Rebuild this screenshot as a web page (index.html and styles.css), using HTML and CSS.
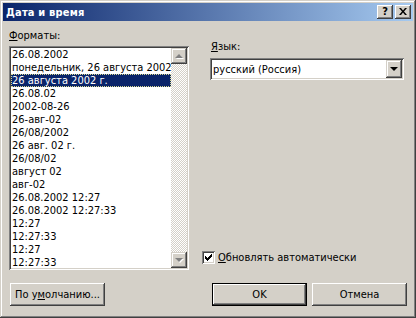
FILE: index.html
```html
<!DOCTYPE html>
<html lang="ru">
<head>
    <meta charset="UTF-8">
    <title>Дата и время</title>
    <link rel="stylesheet" href="styles.css">
</head>
<body>
    <!-- окно диалога -->
    <div class="window">
        <div class="titlebar">
            <span class="title">Дата и время</span>
            <div class="caption-buttons">
                <span class="cbtn">?</span>
                <span class="cbtn">
                    <svg width="8" height="7" viewBox="0 0 8 7"><path d="M0 0h2l2 2.5L6 0h2L5 3.5 8 7H6L4 4.5 2 7H0l3-3.5z" fill="#000"/></svg>
                </span>
            </div>
        </div>

        <div class="client">
            <div class="main">
                <!-- список форматов -->
                <div class="formats">
                    <div class="label"><u>Ф</u>орматы:</div>
                    <div class="listbox">
                        <ul class="items">
                            <li>26.08.2002</li>
                            <li>понедельник, 26 августа 2002</li>
                            <li class="selected">26 августа 2002 г.</li>
                            <li>26.08.02</li>
                            <li>2002-08-26</li>
                            <li>26-авг-02</li>
                            <li>26/08/2002</li>
                            <li>26 авг. 02 г.</li>
                            <li>26/08/02</li>
                            <li>август 02</li>
                            <li>авг-02</li>
                            <li>26.08.2002 12:27</li>
                            <li>26.08.2002 12:27:33</li>
                            <li>12:27</li>
                            <li>12:27:33</li>
                            <li>12:27</li>
                            <li>12:27:33</li>
                        </ul>
                        <div class="scrollbar">
                            <div class="sbtn"><span class="arrow up"></span></div>
                            <div class="track"></div>
                            <div class="sbtn"><span class="arrow down"></span></div>
                        </div>
                    </div>
                </div>

                <!-- язык -->
                <div class="language">
                    <div class="label lang-label"><u>Я</u>зык:</div>
                    <div class="combo">
                        <span class="combo-text">русский (Россия)</span>
                        <span class="combo-btn"><span class="arrow-black"></span></span>
                    </div>
                    <div class="check-row">
                        <span class="checkbox">
                            <svg width="7" height="7" viewBox="0 0 7 7"><path d="M0 2h1v1h1v1h1V3h1V2h1V1h1V0h1v3H6v1H5v1H4v1H3v1H2V6H1V5H0z" fill="#000"/></svg>
                        </span>
                        <span><u>О</u>бновлять автоматически</span>
                    </div>
                </div>
            </div>

            <!-- кнопки -->
            <div class="buttons">
                <div class="btn">По у<u>м</u>олчанию...</div>
                <div class="right-buttons">
                    <div class="btn default">OK</div>
                    <div class="btn">Отмена</div>
                </div>
            </div>
        </div>
    </div>
</body>
</html>
```

FILE: styles.css
```css
/* общие */
body {
    margin: 0;
    font-family: "DejaVu Sans Condensed", "DejaVu Sans", sans-serif;
    font-stretch: condensed;
    font-size: 11px;
    color: #000;
    background: #d4d0c8;
}

u {
    text-decoration: underline;
    text-underline-offset: 1px;
}

/* окно */
.window {
    width: 416px;
    height: 318px;
    box-sizing: border-box;
    padding: 3px 3px 4px;
    background: #d4d0c8;
    box-shadow: inset -1px -1px #404040, inset 1px 1px #d4d0c8,
                inset -2px -2px #808080, inset 2px 2px #fff;
    display: flex;
    flex-direction: column;
}

.titlebar {
    height: 18px;
    background: linear-gradient(to right, #0a246a, #a6caf0);
    display: flex;
    align-items: center;
    justify-content: space-between;
    padding: 0 2px 0 3px;
}

.title {
    color: #fff;
    font-weight: bold;
    font-size: 11px;
    letter-spacing: 0.2px;
}

.caption-buttons {
    display: flex;
    gap: 2px;
}

.cbtn {
    width: 16px;
    height: 14px;
    box-sizing: border-box;
    background: #d4d0c8;
    box-shadow: inset -1px -1px #404040, inset 1px 1px #fff,
                inset -2px -2px #808080, inset 2px 2px #d4d0c8;
    display: flex;
    align-items: center;
    justify-content: center;
    font-weight: bold;
    font-size: 11px;
    font-family: "DejaVu Sans", sans-serif;
    line-height: 1;
    padding-bottom: 1px;
}

.client {
    flex: 1;
    margin-top: 1px;
    padding: 7px 6px 8px 6px;
    display: flex;
    flex-direction: column;
}

.main {
    display: flex;
    gap: 13px;
}

.label {
    line-height: 13px;
    height: 13px;
}

/* список */
.formats {
    width: 180px;
}

.listbox {
    margin-top: 4px;
    height: 224px;
    box-sizing: border-box;
    padding: 2px;
    background: #fff;
    box-shadow: inset 1px 1px #808080, inset -1px -1px #fff,
                inset 2px 2px #404040, inset -2px -2px #d4d0c8;
    display: flex;
    overflow: hidden;
}

.items {
    list-style: none;
    margin: 0;
    padding: 0;
    flex: 1;
    overflow: hidden;
}

.items li {
    height: 13px;
    line-height: 13px;
    padding-left: 1px;
    white-space: nowrap;
}

.items li.selected {
    background: #0a246a;
    color: #fff;
    outline: 1px dotted #d8d890;
    outline-offset: -1px;
}

.scrollbar {
    width: 16px;
    display: flex;
    flex-direction: column;
}

.track {
    flex: 1;
    background: repeating-conic-gradient(#fff 0 25%, #d4d0c8 0 50%) 0 0 / 2px 2px;
}

.sbtn {
    height: 16px;
    background: #d4d0c8;
    box-shadow: inset -1px -1px #404040, inset 1px 1px #d4d0c8,
                inset -2px -2px #808080, inset 2px 2px #fff;
    display: flex;
    align-items: center;
    justify-content: center;
}

.arrow {
    width: 0;
    height: 0;
    border-left: 4px solid transparent;
    border-right: 4px solid transparent;
    filter: drop-shadow(1px 1px 0 #fff);
}

.arrow.up {
    border-bottom: 4px solid #808080;
}

.arrow.down {
    border-top: 4px solid #808080;
}

/* язык */
.language {
    flex: 1;
    display: flex;
    flex-direction: column;
    margin-top: -7px;
    padding-top: 18px;
}

.lang-label {
    margin-left: 9px;
}

.combo {
    margin: 5px 0 0 8px;
    width: 194px;
    height: 22px;
    box-sizing: border-box;
    padding: 2px;
    background: #fff;
    box-shadow: inset 1px 1px #808080, inset -1px -1px #fff,
                inset 2px 2px #404040, inset -2px -2px #d4d0c8;
    display: flex;
    align-items: center;
}

.combo-text {
    flex: 1;
    padding-left: 1px;
}

.combo-btn {
    width: 16px;
    height: 18px;
    box-sizing: border-box;
    background: #d4d0c8;
    box-shadow: inset -1px -1px #404040, inset 1px 1px #d4d0c8,
                inset -2px -2px #808080, inset 2px 2px #fff;
    display: flex;
    align-items: center;
    justify-content: center;
}

.arrow-black {
    width: 0;
    height: 0;
    border-left: 4px solid transparent;
    border-right: 4px solid transparent;
    border-top: 4px solid #000;
}

.check-row {
    margin-top: auto;
    margin-bottom: 6px;
    display: flex;
    align-items: center;
    gap: 3px;
    height: 13px;
}

.checkbox {
    width: 13px;
    height: 13px;
    box-sizing: border-box;
    background: #fff;
    box-shadow: inset 1px 1px #808080, inset -1px -1px #fff,
                inset 2px 2px #404040, inset -2px -2px #d4d0c8;
    display: flex;
    align-items: center;
    justify-content: center;
}

/* кнопки */
.buttons {
    margin-top: 13px;
    display: flex;
    justify-content: space-between;
}

.right-buttons {
    display: flex;
    gap: 5px;
}

.btn {
    width: 95px;
    height: 23px;
    box-sizing: border-box;
    background: #d4d0c8;
    box-shadow: inset -1px -1px #404040, inset 1px 1px #fff,
                inset -2px -2px #808080, inset 2px 2px #d4d0c8;
    display: flex;
    align-items: center;
    justify-content: center;
}

.buttons > .btn {
    margin-left: 1px;
}

.btn.default {
    box-shadow: inset 0 0 0 1px #000,
                inset -2px -2px #404040, inset 2px 2px #fff,
                inset -3px -3px #808080, inset 3px 3px #d4d0c8;
}
```
